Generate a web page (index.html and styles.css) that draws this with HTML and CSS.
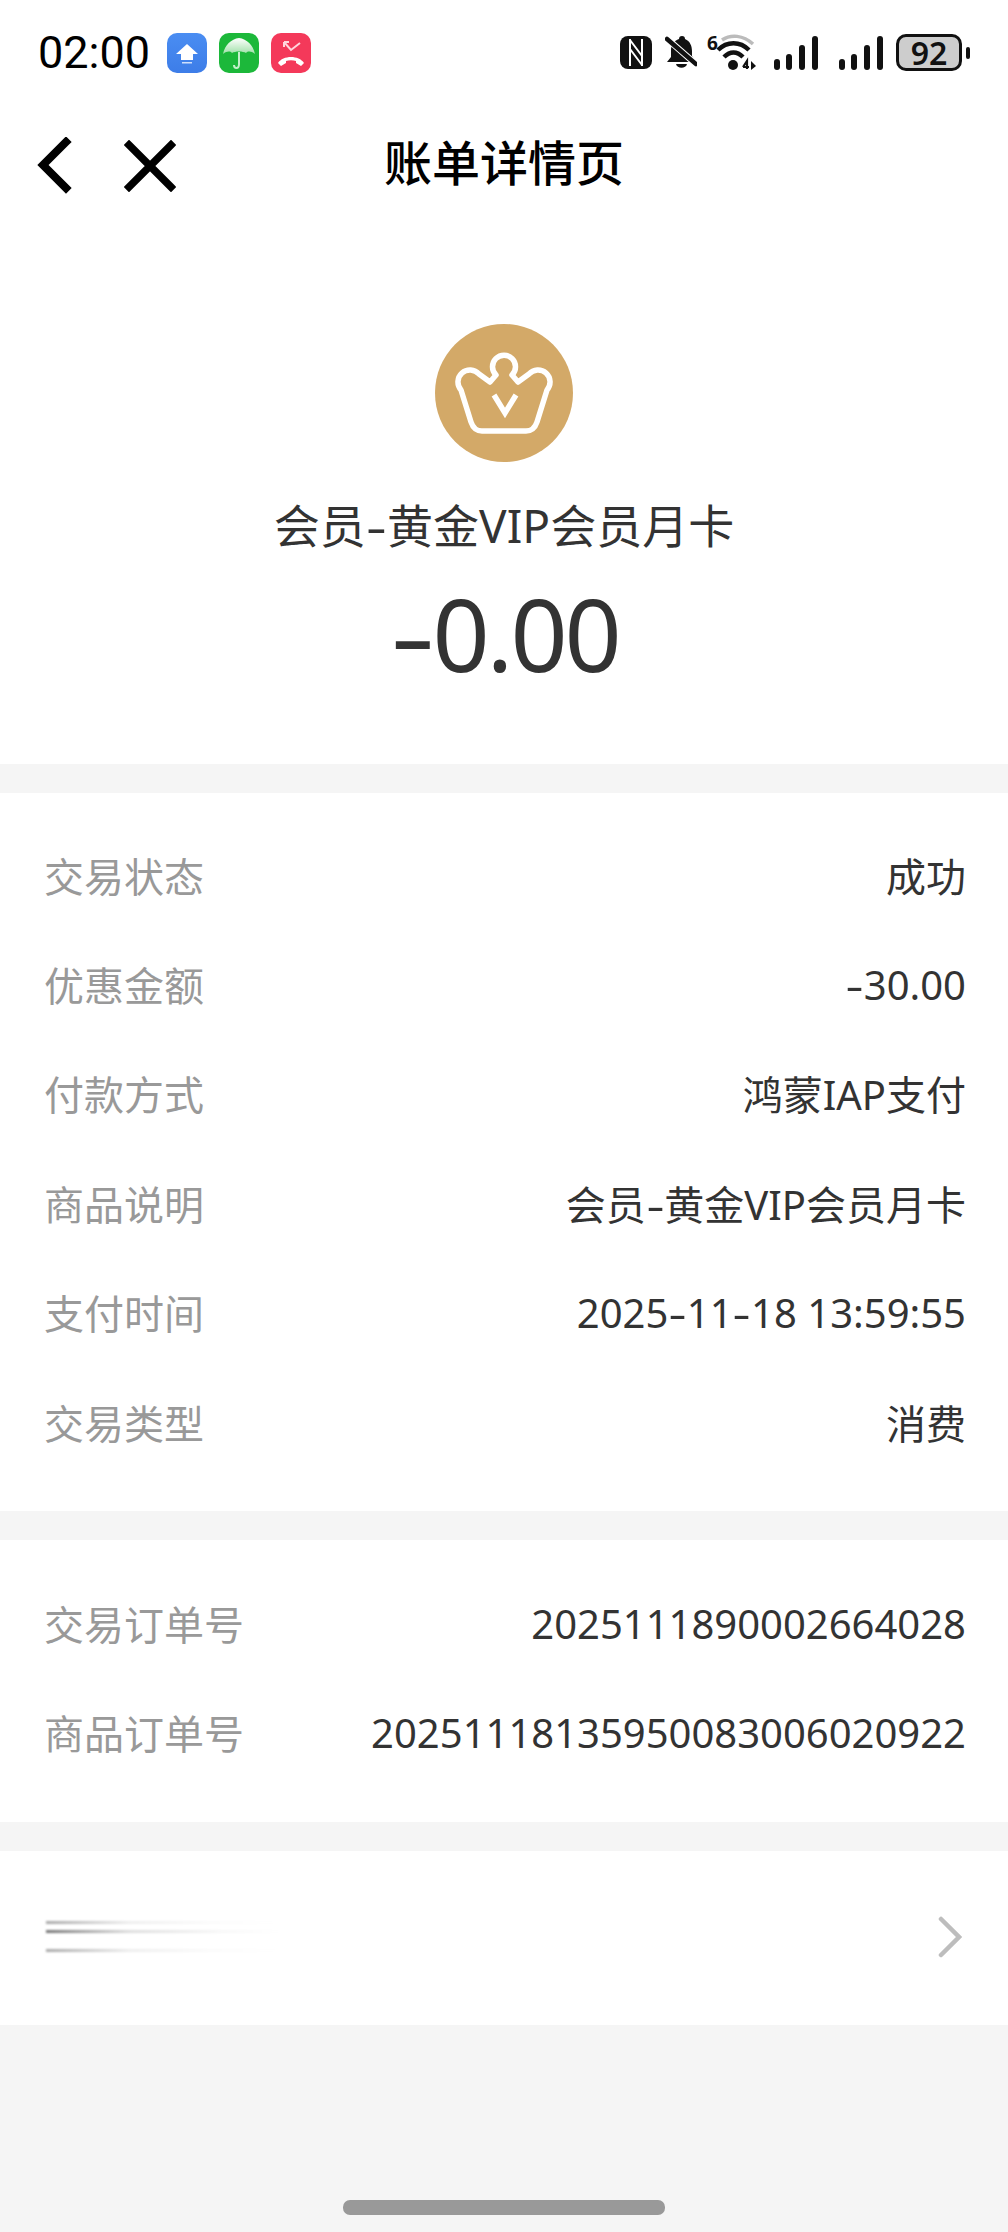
FILE: index.html
```html
<!DOCTYPE html>
<html lang="zh">
<head>
<meta charset="utf-8">
<title>账单详情页</title>
<link rel="stylesheet" href="styles.css">
</head>
<body>
<div class="page">
  <header class="top">
    <div class="status">
      <span class="time">02:00</span>
      <div class="apps">
        <svg class="app" viewBox="0 0 40 40"><defs><linearGradient id="blu" x1="0" y1="0" x2="0" y2="1"><stop offset="0" stop-color="#4a8df2"/><stop offset="1" stop-color="#3d7de8"/></linearGradient></defs><rect width="40" height="40" rx="10" fill="url(#blu)"/><path d="M20 11 31 21H26V27H14V21H9Z" fill="#fff"/><rect x="15" y="29" width="10" height="1.500" fill="#cfe0fb"/></svg>
        <svg class="app" viewBox="0 0 40 40"><defs><linearGradient id="umb" x1="0" y1="0" x2="0" y2="1"><stop offset="0" stop-color="#fff"/><stop offset="1" stop-color="#9fe0a8"/></linearGradient></defs><rect width="40" height="40" rx="10" fill="#1cb83a"/><path d="M20 5C28 6 34 12 36 21 32 18 29 18 27 20 24 18 16 18 13 20 11 18 8 18 4 21 6 12 12 6 20 5Z" fill="url(#umb)"/><path d="M20 19V31Q20 35 17.500 35 15 35 15 32" fill="none" stroke="#c4f0ca" stroke-width="2"/></svg>
        <svg class="app" viewBox="0 0 40 40"><rect width="40" height="40" rx="10" fill="#f4395a"/><path d="M7 30C12 22 28 22 33 30L30 33 25 30V28C22 27 18 27 15 28V30L10 33Z" fill="#fff"/><path d="M13 9 20 17 29 10M13 9H18M13 9V14" fill="none" stroke="#ffd5dc" stroke-width="2"/></svg>
      </div>
      <div class="sys">
        <svg class="nfc" viewBox="0 0 32 33"><rect width="32" height="33" rx="8" fill="#111"/><path d="M10 3V30M22 3V30M10 4 22 20M10 13 22 29" fill="none" stroke="#fff" stroke-width="2"/></svg>
        <svg class="bell" viewBox="0 0 32 33"><path d="M17 0C19 0 20 1 20 3 25 5 27 10 27 15V20L31 26H2L6 21V14C6 9 9 5 14 3 14 1 15 0 17 0Z" fill="#111"/><path d="M11 28H22C21 33 12 33 11 28Z" fill="#111"/><path d="M0 1 32 29" stroke="#fff" stroke-width="6.500"/><path d="M2 3 31 28" stroke="#111" stroke-width="4.500" stroke-linecap="round"/></svg>
        <svg class="wifi" viewBox="0 0 50 37"><text x="0" y="16" class="wifi-six">6</text><path d="M15 6C24 0 36 1 46 10" fill="none" stroke="#bbb" stroke-width="3.500"/><path d="M11 16C20 7 33 7 42 16" fill="none" stroke="#111" stroke-width="4.500"/><path d="M17 23C23 17 30 17 36 23" fill="none" stroke="#111" stroke-width="4.500"/><circle cx="26" cy="31" r="5" fill="#111"/><path d="M36 33 40 27V35M36 33H42" fill="none" stroke="#111" stroke-width="2.200"/><path d="M44 27 49 32 44 36Z" fill="#111"/></svg>
        <svg class="signal" viewBox="0 0 44 34"><rect x="0" y="23" width="6" height="11" rx="3" fill="#111"/><rect x="12" y="18" width="6" height="16" rx="3" fill="#111"/><rect x="25" y="9" width="6" height="25" rx="3" fill="#111"/><rect x="38" y="0" width="6" height="34" rx="3" fill="#111"/></svg>
        <svg class="signal last" viewBox="0 0 44 34"><rect x="0" y="23" width="6" height="11" rx="3" fill="#111"/><rect x="12" y="18" width="6" height="16" rx="3" fill="#111"/><rect x="25" y="9" width="6" height="25" rx="3" fill="#111"/><rect x="38" y="0" width="6" height="34" rx="3" fill="#111"/></svg>
        <div class="battery"><span class="level">92</span></div>
        <span class="nub"></span>
      </div>
    </div>
    <nav class="nav">
      <div class="nav-icons">
        <svg class="back" viewBox="0 0 36 58"><path d="M29 5 6 28 29 51" fill="none" stroke="#000" stroke-width="8" stroke-linecap="square" stroke-linejoin="miter"/></svg>
        <svg class="close" viewBox="0 0 52 52"><path d="M5 5 47 47M47 5 5 47" fill="none" stroke="#000" stroke-width="7.500" stroke-linecap="square"/></svg>
      </div>
      <h1 class="title">账单详情页</h1>
    </nav>
  </header>

  <section class="hero">
    <svg class="badge" viewBox="0 0 138 138"><circle cx="69" cy="69" r="69" fill="#d3a968"/><path d="M26 66A12 12 0 1 1 44 50L55 58 61 51A11.500 11.500 0 1 1 77 51L83 58 94 50A12 12 0 1 1 112 66L102 98Q99 107 91 107H47Q39 107 36 98Z" fill="none" stroke="#fff" stroke-width="5.500" stroke-linejoin="round"/><path d="M59 71 70 89 81 71" fill="none" stroke="#fff" stroke-width="5.500"/></svg>
    <div class="product">会员<span class="hy">-</span>黄金VIP会员月卡</div>
    <div class="amount"><span class="hy">-</span>0.00</div>
  </section>

  <section class="card first">
    <div class="row"><span class="key">交易状态</span><span class="val">成功</span></div>
    <div class="row"><span class="key">优惠金额</span><span class="val"><span class="hy">-</span>30.00</span></div>
    <div class="row"><span class="key">付款方式</span><span class="val">鸿蒙IAP支付</span></div>
    <div class="row"><span class="key">商品说明</span><span class="val">会员<span class="hy">-</span>黄金VIP会员月卡</span></div>
    <div class="row"><span class="key">支付时间</span><span class="val">2025<span class="hy">-</span>11<span class="hy">-</span>18 13:59:55</span></div>
    <div class="row"><span class="key">交易类型</span><span class="val">消费</span></div>
  </section>

  <section class="card second">
    <div class="row"><span class="key">交易订单号</span><span class="val">2025111890002664028</span></div>
    <div class="row"><span class="key">商品订单号</span><span class="val">20251118135950083006020922</span></div>
  </section>

  <section class="link">
    <div class="blur">
      <span class="blur-line"></span>
      <span class="blur-line strong"></span>
      <span class="blur-line low"></span>
    </div>
    <svg class="chev" viewBox="0 0 24 42"><path d="M3 3 21 21 3 39" fill="none" stroke="#bdbdbd" stroke-width="4.500" stroke-linecap="round"/></svg>
  </section>

  <div class="home"></div>
</div>
</body>
</html>
```

FILE: styles.css
```css
* { box-sizing: border-box; }
html, body { margin: 0; padding: 0; }
body { background: #f5f5f5; font-family: "Noto Sans", "Noto Sans CJK SC", sans-serif; }
.page { width: 1008px; height: 2232px; display: flex; flex-direction: column; }

.top { background: #fff; height: 220px; flex: none; }
.status { height: 105px; display: flex; align-items: center; padding: 0 38px 0 38px; }
.time { font: 400 45px/1.2 Roboto, sans-serif; color: #000; width: 129px; }
.apps { display: flex; gap: 12px; }
.app { width: 40px; height: 40px; display: block; }
.sys { margin-left: auto; display: flex; align-items: center; }
.sys svg { display: block; }
.nfc { width: 32px; height: 33px; margin-right: 13px; }
.bell { width: 32px; height: 33px; margin-right: 10px; }
.wifi { width: 50px; height: 37px; margin-right: 17px; overflow: visible; }
.signal { width: 44px; height: 34px; margin-right: 21px; }
.signal.last { margin-right: 13px; }
.wifi-six { font: 700 19px/1 "Noto Sans", sans-serif; fill: #111; }
.battery { width: 66px; height: 37px; border: 3px solid #111; border-radius: 10px; background: #cdcdcd; display: flex; align-items: center; justify-content: center; }
.level { font: 600 32px/1 "Noto Sans", sans-serif; color: #111; }
.nub { width: 4px; height: 12px; background: #111; border-radius: 2px; margin-left: 4px; }

.nav { height: 115px; position: relative; display: flex; align-items: center; justify-content: center; }
.nav-icons { position: absolute; left: 37px; top: 32px; display: flex; align-items: center; gap: 51px; }
.back { width: 36px; height: 58px; display: block; }
.close { width: 52px; height: 52px; display: block; }
.title { margin: 0; font: 500 48px/1 "Noto Sans CJK SC", sans-serif; color: #000; position: relative; top: -3px; }

.hero { background: #fff; height: 544px; flex: none; display: flex; flex-direction: column; align-items: center; padding-top: 104px; margin-bottom: 29px; }
.badge { width: 138px; height: 138px; display: block; }
.product { font: 400 46px/60px "Noto Sans", "Noto Sans CJK SC", sans-serif; color: #333; margin-top: 33px; }
.amount { font: 400 100px/1 "Noto Sans", sans-serif; color: #333; letter-spacing: -3px; margin-top: 28px; }

.hy { display: inline-block; transform: scaleX(1.4); margin: 0 .07em; }

.card { background: #fff; padding: 28px 42px 35px 44px; margin-bottom: 29px; flex: none; }
.card.first { padding-top: 27px; padding-bottom: 35px; }
.row { height: 109.400px; display: flex; justify-content: space-between; align-items: center; }
.key { font-size: 40px; color: #999; font-family: "Noto Sans CJK SC", sans-serif; }
.val { font-size: 40px; color: #333; font-family: "Noto Sans", "Noto Sans CJK SC", sans-serif; }

.link { background: #fff; height: 174px; flex: none; display: flex; align-items: center; justify-content: space-between; padding: 0 46px 3px 46px; }
.blur { display: flex; flex-direction: column; width: 236px; filter: blur(1px); }
.blur-line { height: 3px; background: linear-gradient(90deg, #aaa, #eee 35%, #fbfbfb 70%, #fff); margin-bottom: 6px; }
.blur-line.strong { background: linear-gradient(90deg, #777, #ddd 35%, #f8f8f8 75%, #fff); margin-bottom: 16px; }
.blur-line.low { margin-bottom: 0; }
.chev { width: 24px; height: 42px; display: block; }

.home { width: 322px; height: 15px; border-radius: 7px; background: #999; margin: auto auto 17px; }
```
